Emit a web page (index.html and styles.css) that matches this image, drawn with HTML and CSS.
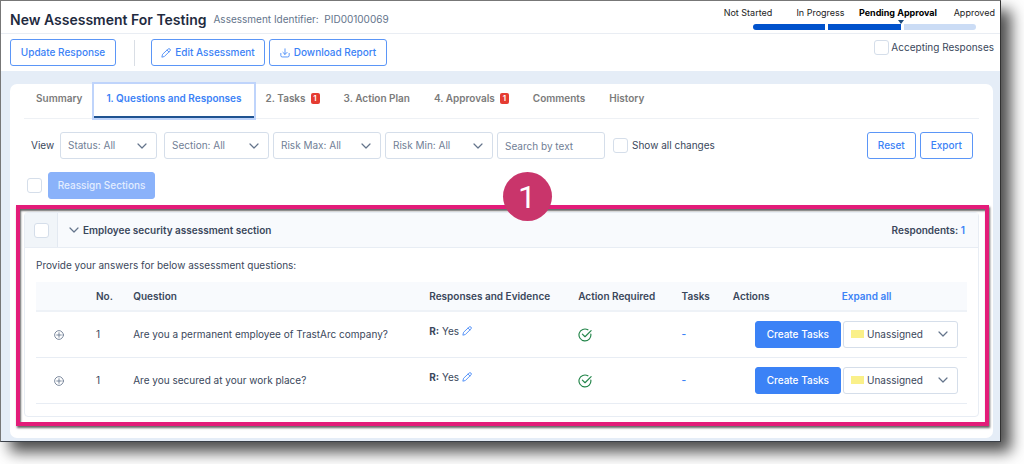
FILE: index.html
```html
<!DOCTYPE html>
<html lang="en">
<head>
    <meta charset="UTF-8">
    <meta name="viewport" content="width=device-width, initial-scale=1.0">
    <title>New Assessment For Testing</title>
    <link rel="stylesheet" href="styles.css">
</head>
<body>
    <!-- shared icons -->
    <svg width="0" height="0" class="sprite" aria-hidden="true">
        <symbol id="chevron" viewBox="0 0 10 10"><path d="M1 3l4 4 4-4"/></symbol>
        <symbol id="pencil" viewBox="0 0 24 24"><path d="M17 2.500a3 3 0 0 1 4.500 4.500L8 20.500l-6 1.500 1.500-6zM14.500 5l4.500 4.500"/></symbol>
        <symbol id="plus" viewBox="0 0 24 24"><circle cx="12" cy="12" r="10.500"/><path d="M12 6.500v11M6.500 12h11"/></symbol>
        <symbol id="check" viewBox="0 0 24 24"><path d="M22 10.500A10.200 10.200 0 1 1 17 3.100"/><path d="M7.500 10.500l4.500 4.500L22.500 4.500"/></symbol>
    </svg>

    <div class="window">
        <header class="page-header">
            <h1>New Assessment For Testing</h1>
            <span class="identifier">Assessment Identifier:&nbsp; PID00100069</span>
            <div class="progress">
                <ol class="steps">
                    <li>Not Started</li>
                    <li>In Progress</li>
                    <li class="current">Pending Approval</li>
                    <li>Approved</li>
                </ol>
                <div class="bars">
                    <span class="bar done"></span>
                    <span class="bar done marker"></span>
                    <span class="bar"></span>
                </div>
            </div>
        </header>

        <div class="toolbar">
            <button type="button" class="btn update">Update Response</button>
            <span class="divider"></span>
            <button type="button" class="btn edit"><svg class="icon"><use href="#pencil"/></svg>Edit Assessment</button>
            <button type="button" class="btn download"><svg class="icon" viewBox="0 0 24 24"><path d="M12 2v13M7 10.500l5 5 5-5M2 13v5a3.500 3.500 0 0 0 3.500 3.500h13A3.500 3.500 0 0 0 22 18v-5"/></svg>Download Report</button>
            <label class="check accepting"><input type="checkbox">Accepting Responses</label>
        </div>

        <main class="content">
            <div class="card">
                <nav class="tabs">
                    <a href="#">Summary</a>
                    <a href="#" class="active">1. Questions and Responses</a>
                    <a href="#">2. Tasks <span class="badge">1</span></a>
                    <a href="#">3. Action Plan</a>
                    <a href="#">4. Approvals <span class="badge">1</span></a>
                    <a href="#">Comments</a>
                    <a href="#">History</a>
                </nav>

                <form class="filters">
                    <span class="view">View</span>
                    <div class="select status">
                        <select aria-label="Status"><option>Status: All</option></select>
                        <svg class="chevron"><use href="#chevron"/></svg>
                    </div>
                    <div class="select by-section">
                        <select aria-label="Section"><option>Section: All</option></select>
                        <svg class="chevron"><use href="#chevron"/></svg>
                    </div>
                    <div class="select">
                        <select aria-label="Risk Max"><option>Risk Max: All</option></select>
                        <svg class="chevron"><use href="#chevron"/></svg>
                    </div>
                    <div class="select">
                        <select aria-label="Risk Min"><option>Risk Min: All</option></select>
                        <svg class="chevron"><use href="#chevron"/></svg>
                    </div>
                    <input type="text" class="search" placeholder="Search by text" aria-label="Search by text">
                    <label class="check changes"><input type="checkbox">Show all changes</label>
                    <button type="reset" class="btn reset">Reset</button>
                    <button type="button" class="btn export">Export</button>
                </form>

                <div class="reassign">
                    <input type="checkbox" aria-label="Select all sections">
                    <button type="button" class="btn primary" disabled>Reassign Sections</button>
                </div>

                <div class="highlight">
                    <span class="callout">1</span>
                    <section class="section">
                        <div class="section-header">
                            <div class="section-check"><input type="checkbox" aria-label="Select section"></div>
                            <h2><svg class="chevron"><use href="#chevron"/></svg>Employee security assessment section</h2>
                            <span class="respondents">Respondents: <a href="#">1</a></span>
                        </div>
                        <div class="section-body">
                            <p>Provide your answers for below assessment questions:</p>
                            <table>
                                <colgroup>
                                    <col class="c-toggle"><col class="c-no"><col class="c-question"><col class="c-resp">
                                    <col class="c-required"><col class="c-tasks"><col class="c-actions"><col class="c-expand">
                                </colgroup>
                                <thead>
                                    <tr>
                                        <th></th>
                                        <th>No.</th>
                                        <th>Question</th>
                                        <th>Responses and Evidence</th>
                                        <th>Action Required</th>
                                        <th>Tasks</th>
                                        <th>Actions</th>
                                        <th><a href="#">Expand all</a></th>
                                    </tr>
                                </thead>
                                <tbody>
                                    <tr>
                                        <td class="toggle"><svg class="icon"><use href="#plus"/></svg></td>
                                        <td>1</td>
                                        <td>Are you a permanent employee of TrastArc company?</td>
                                        <td class="response"><b>R:</b> Yes <svg class="icon"><use href="#pencil"/></svg></td>
                                        <td><svg class="icon ok"><use href="#check"/></svg></td>
                                        <td><a href="#" class="tasks">-</a></td>
                                        <td colspan="2">
                                            <div class="actions">
                                                <button type="button" class="btn primary">Create Tasks</button>
                                                <div class="select assign">
                                                    <span class="swatch"></span>
                                                    <select aria-label="Risk"><option>Unassigned</option></select>
                                                    <svg class="chevron"><use href="#chevron"/></svg>
                                                </div>
                                            </div>
                                        </td>
                                    </tr>
                                    <tr>
                                        <td class="toggle"><svg class="icon"><use href="#plus"/></svg></td>
                                        <td>1</td>
                                        <td>Are you secured at your work place?</td>
                                        <td class="response"><b>R:</b> Yes <svg class="icon"><use href="#pencil"/></svg></td>
                                        <td><svg class="icon ok"><use href="#check"/></svg></td>
                                        <td><a href="#" class="tasks">-</a></td>
                                        <td colspan="2">
                                            <div class="actions">
                                                <button type="button" class="btn primary">Create Tasks</button>
                                                <div class="select assign">
                                                    <span class="swatch"></span>
                                                    <select aria-label="Risk"><option>Unassigned</option></select>
                                                    <svg class="chevron"><use href="#chevron"/></svg>
                                                </div>
                                            </div>
                                        </td>
                                    </tr>
                                </tbody>
                            </table>
                        </div>
                    </section>
                </div>
            </div>
        </main>
    </div>
</body>
</html>
```
FILE: styles.css
```css
* {
    box-sizing: border-box;
}
body {
    margin: 0;
    padding: 0 23px 22px 0;
    background-color: #fff;
    color: #3a475b;
    font-family: Inter, sans-serif;
    font-size: 10px;
    line-height: 15px;
}
a {
    color: #3b82f6;
    text-decoration: none;
}
button, input, select {
    font: inherit;
    margin: 0;
}
.sprite {
    position: absolute;
}
.window {
    background-color: #fff;
    border: 1px solid #777;
    border-right-color: #333;
    border-bottom-color: #3a4048;
    box-shadow: 10px 10px 14px rgba(0,0,0,0.7);
}

/* header */
.page-header {
    display: flex;
    align-items: center;
    height: 33px;
    padding-left: 9px;
    border-bottom: 1px solid #e9edf3;
}
h1 {
    margin: 5px 7px 0 0;
    font-size: 14px;
    font-weight: 600;
    line-height: 20px;
    color: #1f2b3f;
}
.identifier {
    margin-top: 5px;
    color: #64748b;
}
.progress {
    margin-left: auto;
}
.steps {
    display: grid;
    grid-template-columns: 74px 71px 84px 60px;
    margin: 0;
    padding: 0;
    list-style: none;
    font-size: 9px;
    color: #222;
    text-align: center;
    white-space: nowrap;
}
.steps li:last-child {
    text-align: right;
    padding-right: 5px;
}
.steps .current {
    font-weight: bold;
    color: #000;
}
.bars {
    display: grid;
    grid-template-columns: repeat(3, 1fr);
    gap: 3px;
    margin: 4px 24px 0 42px;
}
.bar {
    position: relative;
    height: 6px;
    background-color: #cbdcf5;
}
.bar:first-child {
    border-radius: 3px 0 0 3px;
}
.bar:last-child {
    border-radius: 0 3px 3px 0;
}
.bar.done {
    background-color: #0052cc;
}
.marker::after {
    content: "";
    position: absolute;
    right: -3px;
    top: -4px;
    border: 3px solid transparent;
    border-top: 4px solid #1d4b7c;
    border-bottom: 0;
}

/* buttons and inputs */
.btn {
    display: inline-flex;
    align-items: center;
    justify-content: center;
    gap: 4px;
    height: 27px;
    padding: 0 11px;
    background-color: #fff;
    border: 1px solid #5b96f7;
    border-radius: 3px;
    color: #3b82f6;
    font-weight: 500;
    white-space: nowrap;
}
.btn.primary {
    background-color: #3b82f6;
    border-color: #3b82f6;
    color: #fff;
}
.btn.primary:disabled {
    background-color: #8ab2fa;
    border-color: #8ab2fa;
    color: #e3edff;
}
.icon {
    flex: none;
    width: 10px;
    height: 10px;
    fill: none;
    stroke: currentColor;
    stroke-width: 2;
    stroke-linejoin: round;
    stroke-linecap: round;
}
.chevron {
    flex: none;
    width: 10px;
    height: 10px;
    fill: none;
    stroke: #64748b;
    stroke-width: 1.2;
    stroke-linecap: round;
    stroke-linejoin: round;
    pointer-events: none;
}
input[type="checkbox"] {
    appearance: none;
    width: 15px;
    height: 15px;
    background-color: #fff;
    border: 1px solid #d5deea;
    border-radius: 3px;
}
.check {
    display: flex;
    align-items: center;
    gap: 2px;
}
.toolbar {
    display: flex;
    align-items: center;
    height: 37px;
    padding: 0 6px 0 9px;
}
.update {
    width: 106px;
}
.edit, .download {
    padding: 0 8px;
}
.edit {
    width: 114px;
    margin-right: 4px;
}
.download {
    width: 118px;
}
.divider {
    width: 1px;
    height: 26px;
    margin: 0 16px 0 18px;
    background-color: #d9dee5;
}
.accepting {
    align-self: flex-start;
    margin: 6px 0 0 auto;
}

/* card */
.content {
    padding: 13px 7px 3px 9px;
    background-color: #e5edf7;
}
.card {
    padding-bottom: 12px;
    background-color: #fff;
    border-radius: 7px;
}
.tabs {
    display: flex;
    height: 35px;
    margin: 0 14px;
    border-bottom: 1px solid #eef1f5;
}
.tabs a {
    display: flex;
    align-items: center;
    gap: 5px;
    padding: 0 12px 5px;
    color: #7b7b7b;
    font-weight: 600;
    white-space: nowrap;
}
.tabs .active {
    color: #3b82f6;
    border-bottom: 2px solid #1f5391;
    box-shadow: 0 0 0 2px #bfd4fb;
    padding-bottom: 3px;
}
.badge {
    min-width: 9px;
    padding: 0 2px;
    background-color: #e53c32;
    border-radius: 2px;
    color: #fff;
    font-size: 8px;
    line-height: 11px;
    text-align: center;
}
.filters {
    display: flex;
    align-items: center;
    gap: 4px;
    padding: 13px 20px 0 21px;
}
.view {
    width: 25px;
}
.select {
    display: flex;
    align-items: center;
    flex: 0 1 108px;
    height: 27px;
    padding: 0 9px 0 7px;
    border: 1px solid #d5deea;
    border-radius: 3px;
}
.select select {
    flex: 1;
    min-width: 0;
    padding: 0;
    appearance: none;
    background: none;
    border: 0;
    color: #718096;
}
.select.status {
    flex-basis: 97px;
    margin-right: 3px;
}
.select.by-section {
    flex-basis: 105px;
}
.search {
    flex: 0 1 108px;
    min-width: 0;
    height: 27px;
    padding: 0 7px;
    border: 1px solid #d5deea;
    border-radius: 3px;
}
.search::placeholder {
    color: #718096;
}
.changes {
    gap: 4px;
    margin: 0 auto 0 4px;
}
.reset, .export {
    padding: 0 10px;
}
.reassign {
    display: flex;
    align-items: center;
    gap: 6px;
    padding: 13px 17px 6px;
}
.reassign .btn {
    width: 107px;
}

/* highlighted section */
.highlight {
    position: relative;
    margin: 0 4px 0 6px;
    padding: 3px 6px 5px 4px;
    border: 4px solid #e31c79;
    box-shadow: 1px 2px 2px rgba(0,0,0,0.6), inset 1px 2px 2px rgba(0,0,0,0.6);
}
.callout {
    position: absolute;
    top: -37px;
    left: 50%;
    width: 49px;
    height: 49px;
    border-radius: 50%;
    background-color: #c9356b;
    color: #fff;
    font-family: Roboto, sans-serif;
    font-size: 32px;
    line-height: 51px;
    text-align: center;
}
.section {
    border: 1px solid #e8edf4;
    border-radius: 4px;
}
.section-header {
    display: flex;
    align-items: center;
    height: 35px;
    padding-right: 13px;
    background-color: #f8fafd;
    border-bottom: 1px solid #e8edf4;
}
.section-check {
    display: flex;
    align-items: center;
    justify-content: center;
    align-self: stretch;
    width: 33px;
    background-color: #f1f5f9;
    border-right: 1px solid #e3e9f1;
}
h2 {
    display: flex;
    align-items: center;
    gap: 4px;
    margin: 0 0 0 11px;
    font-size: 10px;
    font-weight: 600;
}
.respondents {
    margin-left: auto;
    font-weight: 600;
}
.section-body {
    padding: 10px 11px 12px;
}
.section-body p {
    margin: 0 0 9px;
}
table {
    width: 100%;
    table-layout: fixed;
    border-collapse: collapse;
}
.c-toggle { width: 5.8%; }
.c-no { width: 4%; }
.c-question { width: 31.8%; }
.c-resp { width: 16%; }
.c-required { width: 11.1%; }
.c-tasks { width: 5.5%; }
.c-actions { width: 11.7%; }
.c-expand { width: 14.1%; }
th {
    height: 29px;
    padding: 0 6px;
    background-color: #f8fafd;
    border-bottom: 2px solid #eef2f7;
    text-align: left;
    font-weight: 600;
    white-space: nowrap;
}
td {
    height: 46px;
    padding: 0 6px;
    border-bottom: 1px solid #e8edf4;
}
td svg {
    display: inline-block;
    vertical-align: middle;
}
.toggle {
    padding-left: 18px;
    color: #64748b;
}
.response {
    padding-bottom: 6px;
}
.response .icon {
    margin-bottom: 2px;
    color: #3b82f6;
}
.ok {
    width: 14px;
    height: 14px;
    color: #23854a;
}
.tasks {
    font-weight: 600;
}
.actions {
    display: flex;
    justify-content: flex-end;
    gap: 2px;
    padding-right: 3px;
}
.assign {
    flex-basis: 115px;
}
.assign select {
    color: #3a475b;
}
.swatch {
    width: 13px;
    height: 8px;
    margin-right: 3px;
    background-color: #faf089;
}
```
